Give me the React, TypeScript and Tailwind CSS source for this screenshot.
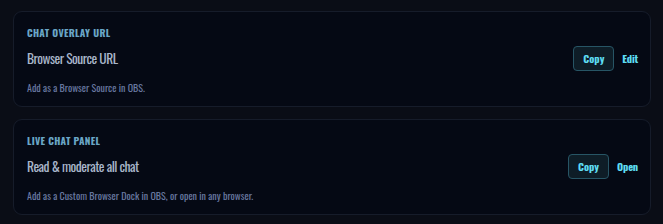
import React from "react";

const font = { fontFamily: '"Oswald", "Liberation Sans Narrow", "DejaVu Sans Condensed", "Roboto Condensed", sans-serif' };

function Card({ title, main, desc, action }: { title: string; main: string; desc: string; action: string }) {
  return (
    <div className="rounded-[9px] border border-[#161c2a] bg-[#050914] pl-[13px] pr-[12px] pt-[14px] pb-[11px]">
      <div className="text-[10px] font-bold uppercase leading-[14px] tracking-[0.3px] text-[#6aa6c6]">{title}</div>
      <div className="mt-[6px] flex items-center justify-between">
        <div className="text-[13.5px] leading-[25px] tracking-[-0.5px] text-[#a9b6ca]">{main}</div>
        <div className="flex items-center gap-[8px]">
          <button className="h-[25px] w-[41px] rounded-[4px] border border-[#275565] bg-[#0e1d27] text-[10.5px] font-bold text-[#5edcf2]">Copy</button>
          <span className="text-[10.5px] font-bold tracking-[-0.2px] text-[#5edcf2]">{action}</span>
        </div>
      </div>
      <div className="mt-[10px] text-[10px] leading-[14px] text-[#6878a0]">{desc}</div>
    </div>
  );
}

export default function App() {
  return (
    <div style={font} className="flex min-h-[224px] w-[663px] flex-col gap-[12px] bg-[#0a0d16] pl-[13px] pr-[12px] pt-[11px]">
      <Card title="Chat Overlay URL" main="Browser Source URL" desc="Add as a Browser Source in OBS." action="Edit" />
      <Card title="Live Chat Panel" main="Read & moderate all chat" desc="Add as a Custom Browser Dock in OBS, or open in any browser." action="Open" />
    </div>
  );
}
